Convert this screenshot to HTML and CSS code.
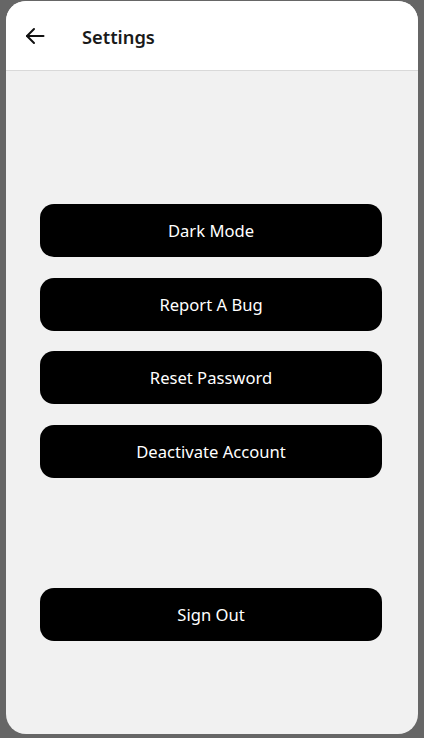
FILE: index.html
```html
<!DOCTYPE html>
<html>
<head>
<meta charset="utf-8">
<link rel="stylesheet" href="styles.css">
</head>
<body>
<div class="phone">
  <header class="topbar">
    <button class="back" aria-label="Back">
      <svg width="20" height="18" viewBox="0 0 20 18" fill="none" stroke="#111" stroke-width="2" stroke-linecap="round" stroke-linejoin="round">
        <path d="M18.5 9H2"/>
        <path d="M9 2L2 9l7 7"/>
      </svg>
    </button>
    <h1 class="title">Settings</h1>
  </header>
  <main class="content">
    <div class="group">
      <button class="btn">Dark Mode</button>
      <button class="btn">Report A Bug</button>
      <button class="btn">Reset Password</button>
      <button class="btn">Deactivate Account</button>
    </div>
    <button class="btn signout">Sign Out</button>
  </main>
</div>
</body>
</html>
```

FILE: styles.css
```css
html, body {
  margin: 0;
  padding: 0;
  background: #666666;
}
body {
  padding: 1px 6px 4px 6px;
  font-family: "Noto Sans", "Open Sans", sans-serif;
}
.phone {
  height: 733px;
  background: #f1f1f1;
  border-radius: 20px;
  overflow: hidden;
  display: flex;
  flex-direction: column;
}
.topbar {
  height: 69px;
  background: #ffffff;
  border-bottom: 1px solid #d9d9d9;
  display: flex;
  align-items: center;
  padding-left: 18px;
  flex-shrink: 0;
}
.back {
  background: none;
  border: 0;
  padding: 0;
  width: 22px;
  height: 22px;
  display: flex;
  align-items: center;
  justify-content: center;
  cursor: pointer;
  margin-top: 1px;
}
.title {
  margin: 2px 0 0 36px;
  font-size: 18.3px;
  font-weight: 600;
  color: #1a1a1a;
  letter-spacing: 0;
}
.content {
  padding: 133px 36px 0 34px;
  display: flex;
  flex-direction: column;
}
.group {
  display: flex;
  flex-direction: column;
  gap: 20.7px;
}
.btn {
  height: 53px;
  border: 0;
  border-radius: 14px;
  background: #000000;
  color: #ffffff;
  font-family: "Noto Sans", "Open Sans", sans-serif;
  font-size: 16.6px;
  font-weight: 400;
  padding-top: 1px;
  cursor: pointer;
}
.signout {
  margin-top: 110px;
}
```
